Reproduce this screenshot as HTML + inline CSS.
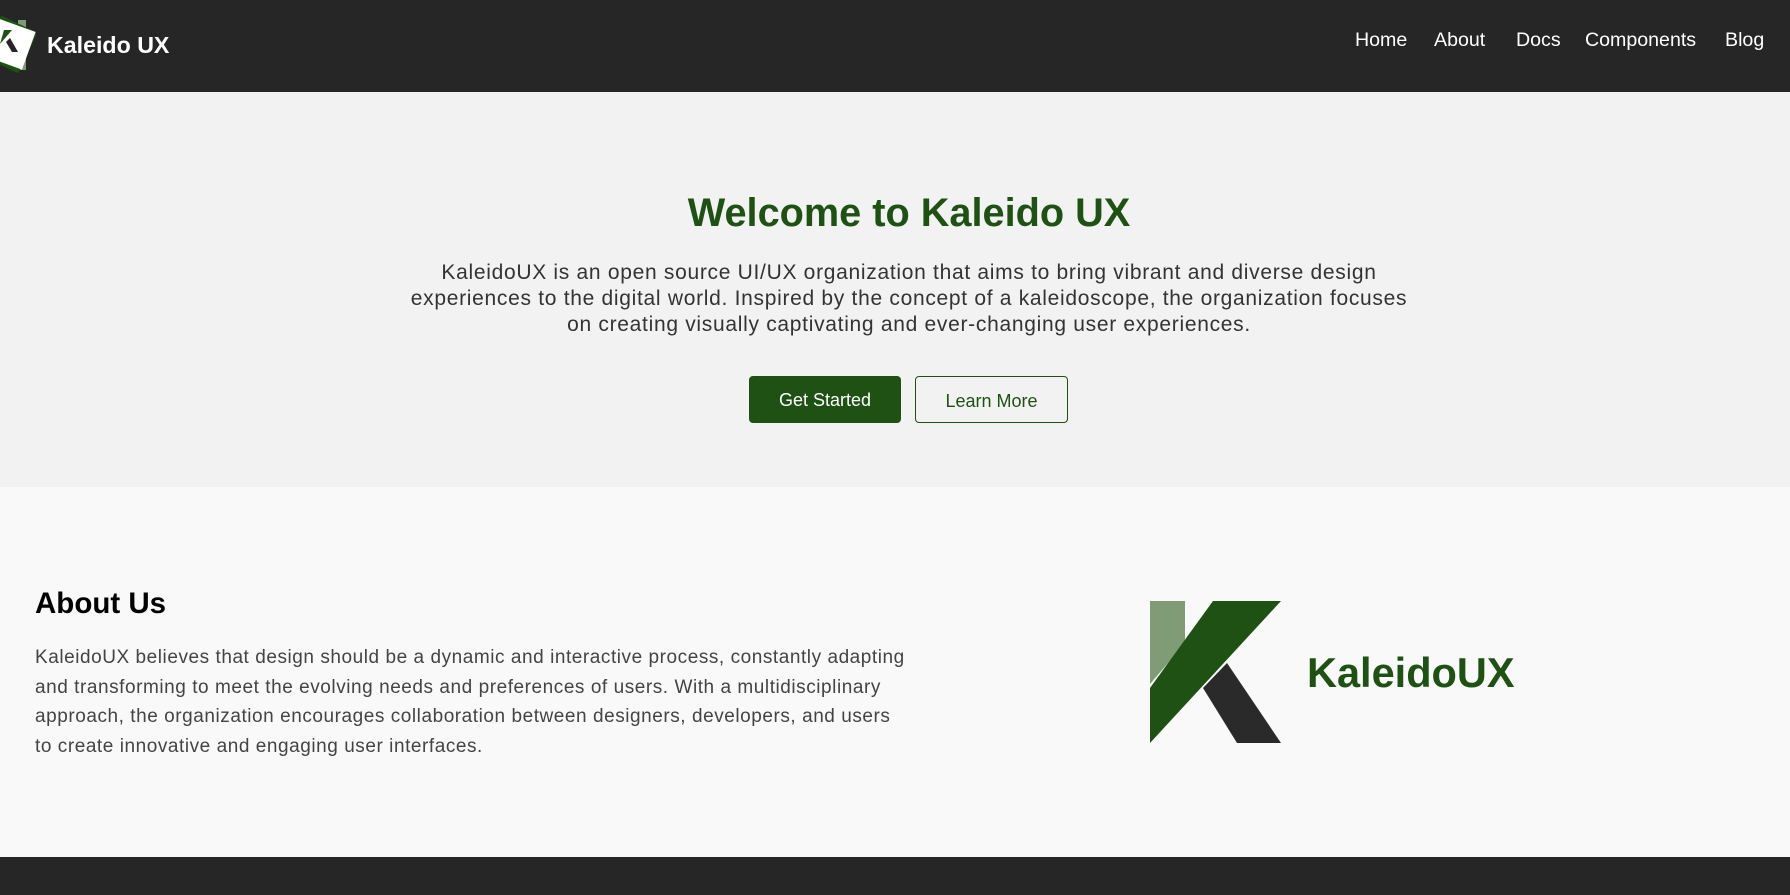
<!DOCTYPE html>
<html><head><meta charset="utf-8"><style>
*{margin:0;padding:0;box-sizing:border-box}
body{width:1790px;height:895px;overflow:hidden;font-family:"Liberation Sans",sans-serif;background:#f9f9f9;position:relative}
.nav{position:absolute;left:0;top:0;width:1790px;height:92px;background:#262626}
.brand{position:absolute;left:47px;top:32px;color:#fff;font-weight:bold;font-size:23.2px;white-space:nowrap}
.nav a{position:absolute;top:29px;color:#fff;font-size:19.6px;text-decoration:none;white-space:nowrap}
.hero{position:absolute;left:0;top:92px;width:1790px;height:395px;background:#f2f2f2}
h1{position:absolute;left:0;width:1818px;top:99px;text-align:center;color:#1f5014;font-size:39.7px;font-weight:bold}
.p1{position:absolute;left:0;width:1818px;top:168px;text-align:center;color:#333;font-size:21px;letter-spacing:0.7px;line-height:26px;white-space:nowrap}
.btn{position:absolute;top:284px;height:47px;border-radius:4px;font-size:18px;line-height:49px;text-align:center}
.about h2{position:absolute;left:35px;top:587px;font-size:29.5px;font-weight:bold;color:#000}
.p2{position:absolute;left:35px;top:643px;font-size:19px;letter-spacing:0.55px;line-height:29.5px;color:#444;white-space:nowrap}
.foot{position:absolute;left:0;top:857px;width:1790px;height:38px;background:#262626}
</style></head><body>
<div class="nav">
<svg style="position:absolute;left:0;top:14px" width="36" height="64" viewBox="0 0 36 64">
<rect x="18" y="6" width="8" height="50" fill="#7f9c77"/>
<rect x="-10" y="8" width="40" height="45" fill="#1f5014" transform="rotate(25 10 30)"/>
<rect x="-8" y="10" width="38" height="40" fill="#fff" transform="rotate(20 10 30)"/>
<polygon points="4,16 12,16 0,30" fill="#1f5014"/>
<polygon points="6,28 10,24 18,38 12,38" fill="#262626"/>
</svg>
<div class="brand">Kaleido UX</div>
<a style="left:1355px">Home</a>
<a style="left:1434px">About</a>
<a style="left:1516px">Docs</a>
<a style="left:1585px">Components</a>
<a style="left:1725px">Blog</a>
</div>
<div class="hero">
<h1>Welcome to Kaleido UX</h1>
<div class="p1">KaleidoUX is an open source UI/UX organization that aims to bring vibrant and diverse design<br>experiences to the digital world. Inspired by the concept of a kaleidoscope, the organization focuses<br>on creating visually captivating and ever-changing user experiences.</div>
<div class="btn" style="left:749px;width:152px;background:#1f5014;color:#fff">Get Started</div>
<div class="btn" style="left:915px;width:153px;border:1px solid #1f5014;color:#1f5014;background:#f2f2f2">Learn More</div>
</div>
<div class="about">
<h2>About Us</h2>
<div class="p2">KaleidoUX believes that design should be a dynamic and interactive process, constantly adapting<br>and transforming to meet the evolving needs and preferences of users. With a multidisciplinary<br>approach, the organization encourages collaboration between designers, developers, and users<br>to create innovative and engaging user interfaces.</div>
</div>
<svg style="position:absolute;left:1150px;top:601px" width="132" height="142" viewBox="0 0 132 142">
<polygon points="0,0 35,0 35,42 0,83" fill="#7f9c77"/>
<polygon points="63,0 131,0 0,142 0,87" fill="#1f5014"/>
<polygon points="77,62 131,142 87,142 53,87" fill="#2a2a2a"/>
</svg>
<div style="position:absolute;left:1307px;top:649px;font-size:41.5px;font-weight:bold;color:#1f5014">KaleidoUX</div>
<div class="foot"></div>
</body></html>
